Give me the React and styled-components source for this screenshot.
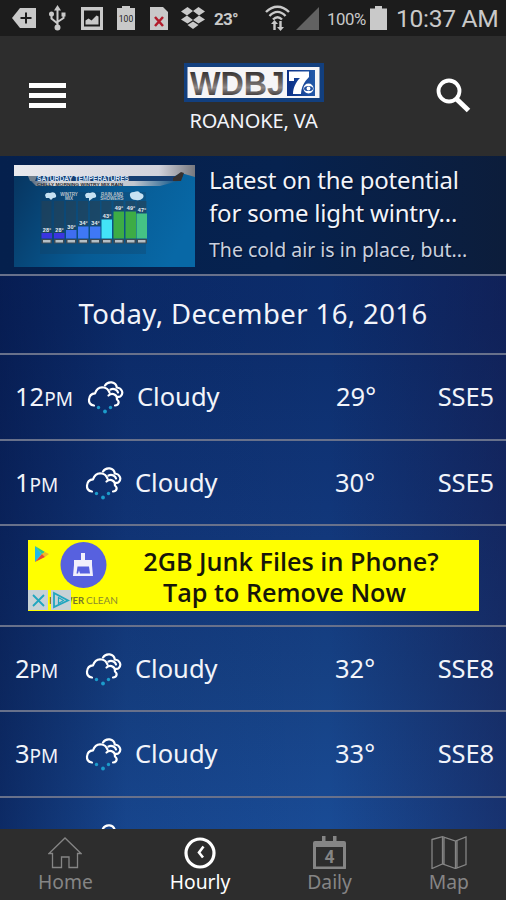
import React from 'react';
import styled, { createGlobalStyle } from 'styled-components';

const GlobalStyle = createGlobalStyle`
  * {
    box-sizing: border-box;
  }

  body {
    margin: 0;
    background: #2d2d2d;
    font-family: 'Noto Sans', 'Open Sans', sans-serif;
  }

  svg {
    display: block;
    flex: none;
  }
`;

const Screen = styled.div`
  display: flex;
  flex-direction: column;
  width: 506px;
  height: 900px;
  overflow: hidden;
  color: #f2f4fa;
`;

const StatusBar = styled.div`
  display: flex;
  align-items: center;
  height: 36px;
  flex: none;
  padding-left: 12px;
  background: #1c1c1c;
  color: #c9c9c9;
  font-family: Roboto, sans-serif;
  white-space: nowrap;
`;

const StatusIcon = styled.svg`
  margin-right: ${({ $gap }) => $gap}px;
`;

const StatusText = styled.span`
  width: ${({ $width }) => $width}px;
  flex: none;
  font-size: ${({ $size }) => $size}px;
  font-weight: ${({ $bold }) => ($bold ? 700 : 400)};
  letter-spacing: ${({ $spacing }) => $spacing || 0}px;
  line-height: 36px;
  padding-top: 1px;
`;

const Header = styled.header`
  display: flex;
  justify-content: space-between;
  height: 120px;
  flex: none;
  padding: 27px 35px 0 29px;
  background: #2d2d2d;
`;

const MenuButton = styled.div`
  display: flex;
  flex-direction: column;
  gap: 5px;
  width: 37px;
  padding-top: 20px;

  i {
    height: 5px;
    background: #fff;
  }
`;

const Brand = styled.div`
  display: flex;
  flex-direction: column;
  align-items: center;
  margin-left: 5px;
`;

const City = styled.div`
  margin-top: 6px;
  font-size: 20px;
  line-height: 26px;
  letter-spacing: -0.1px;
`;

const SearchIcon = styled.svg`
  margin-top: 15px;
`;

const Content = styled.main`
  flex: 1;
  overflow: hidden;
  background:
    linear-gradient(90deg, rgba(3, 16, 62, 0.55) 0%, rgba(3, 16, 62, 0.1) 25%, rgba(3, 16, 62, 0) 65%, rgba(22, 20, 66, 0.45) 100%),
    linear-gradient(180deg, #0b2a68 0%, #0c2d6c 25%, #113679 52%, #164184 78%, #194b95 100%);
`;

const News = styled.section`
  display: flex;
  height: 118px;
  padding: 9px 0 0 14px;
  background: linear-gradient(90deg, #05204d 0%, #06224f 55%, #0c1d3b 100%);
`;

const NewsText = styled.div`
  margin-left: 14px;
  text-shadow: 1px 1px 1px #00102e;
  white-space: nowrap;

  h2 {
    margin: -2px 0 0;
    font-size: 24px;
    font-weight: 400;
    line-height: 33px;
    letter-spacing: -0.2px;
  }

  p {
    margin: 8px 0 0;
    font-size: 19.5px;
    line-height: 26px;
    color: #c9d0de;
  }
`;

const DateTitle = styled.div`
  height: 79px;
  border-top: 2px solid #68718b;
  font-size: 27.5px;
  line-height: 75px;
  letter-spacing: 0.4px;
  text-align: center;
  white-space: nowrap;
`;

const Row = styled.div`
  display: flex;
  height: 85.6px;
  border-top: 2px solid #68718b;
  padding: 0 12px 0 15px;
  font-size: 25.5px;
  line-height: 82px;
`;

const PeekRow = styled(Row)`
  height: 40px;
  padding-left: 85px;
`;

const Time = styled.div`
  width: ${({ $wide }) => ($wide ? 72 : 70)}px;

  small {
    font-size: 19px;
  }
`;

const Sky = styled.div`
  width: ${({ $wide }) => ($wide ? 249 : 250)}px;
  display: flex;
  gap: 12px;
`;

const CloudIcon = styled.svg`
  margin-top: 26px;
`;

const Temp = styled.div`
  flex: 1;
`;

const Wind = styled.div`
  letter-spacing: -0.1px;
`;

const AdSlot = styled.div`
  height: 100.5px;
  border-top: 2px solid #68718b;
  padding: 14px 27px 0 28px;
`;

const Ad = styled.div`
  display: flex;
  height: 71px;
  background: #ffff00;
  color: #16160a;
`;

const AdText = styled.div`
  margin-left: 2px;
  width: 302px;
  padding-top: 6px;
  font-family: 'Open Sans', sans-serif;
  font-weight: 600;
  font-size: 25.2px;
  line-height: 31px;
  text-align: center;
  white-space: nowrap;

  span {
    display: block;
    padding-right: 13px;
  }
`;

const Nav = styled.nav`
  display: flex;
  justify-content: space-between;
  height: 71px;
  flex: none;
  padding: 7px 37px 0 38px;
  background: #2d2d2d;
`;

const NavItem = styled.div`
  display: flex;
  flex-direction: column;
  align-items: center;
  color: ${({ $active }) => ($active ? '#ffffff' : '#858585')};
  font-size: 19.3px;
  line-height: 24px;

  svg {
    margin-bottom: 1px;
  }
`;

const bars = [
  [27.5, 68, 5.5, '#3a35e0', "28°"],
  [40, 68, 5.5, '#3a35e0', "28°"],
  [52, 65, 8.5, '#3f6df0', "30°"],
  [64, 61.5, 12, '#3f78f5', "34°"],
  [76, 61.5, 12, '#3f78f5', "34°"],
  [87.5, 54.5, 19, '#43e4f7', "43°"],
  [99.5, 46.5, 27, '#3dac45', "49°"],
  [111.5, 46.5, 27, '#3dac45', "49°"],
  [122.5, 48.5, 25, '#45c285', "47°"],
];

function StatusIcons() {
  return (
    <>
      <StatusIcon $gap={13} width="24" height="20" viewBox="0 0 24 20">
        <path d="M8 0h16v20H8L0 10z" fill="#c9c9c9" />
        <path d="M14 4.5v11M8.5 10h11" stroke="#1c1c1c" strokeWidth="2" />
      </StatusIcon>
      <StatusIcon $gap={15} width="17" height="26" viewBox="0 0 17 26" fill="none" stroke="#c9c9c9" strokeWidth="2">
        <path d="M8.5 4v18M2.5 10v3.5l6 5M14.5 10v3l-6 4" />
        <path d="M8.5 0l3.5 5.500H5z" fill="#c9c9c9" stroke="none" />
        <circle cx="8.500" cy="22.500" r="2" fill="#c9c9c9" />
        <circle cx="2.500" cy="9" r="1.500" fill="#c9c9c9" />
        <path d="M12.500 7.500h4v4h-4z" fill="#c9c9c9" stroke="none" />
      </StatusIcon>
      <StatusIcon $gap={14} width="22" height="23" viewBox="0 0 22 23">
        <path d="M0 0h22v23H0z" fill="#c9c9c9" />
        <path d="M3 3.500h16v16H3z" fill="#1c1c1c" />
        <path d="M4.500 17.500v-4l3-2 3 2 5-5 2 1v8z" fill="#c9c9c9" />
      </StatusIcon>
      <StatusIcon $gap={15} width="18" height="24" viewBox="0 0 18 24">
        <path d="M0 2h5V0h8v2h5v22H0z" fill="#c9c9c9" />
        <text x="9" y="16" fontSize="8.5" fontFamily="Roboto" textAnchor="middle" fill="#222">100</text>
      </StatusIcon>
      <StatusIcon $gap={13} width="18" height="23" viewBox="0 0 18 23">
        <path d="M0 0h13l5 5v18H0z" fill="#c9c9c9" />
        <path d="M5 10l8 9M13 10l-8 9" stroke="#b11c2b" strokeWidth="2.500" />
      </StatusIcon>
      <StatusIcon $gap={9} width="24" height="22" viewBox="0 0 24 22" fill="#c9c9c9">
        <path d="M6.500 0L12 4 6 8.500 0 4.500zM17.500 0L24 4.500 18 8.500 12 4zM6 8.500L12 13 6.500 16.500 0 12.500zM18 8.500l6 4-6.500 4L12 13zM12 14.500l5.500 3.500-5.500 4-5.500-4z" />
      </StatusIcon>
      <StatusText $width={51} $size={17} $bold $spacing={-0.8}>23°</StatusText>
      <StatusIcon $gap={6} width="25" height="26" viewBox="0 0 25 26" fill="none" stroke="#c9c9c9" strokeWidth="2.400">
        <path d="M1 7c7-7 16-7 23 0M4.500 11c5-5.500 11-5.500 16 0M8 14.500c3-3 6-3 9 0" />
        <path d="M9.500 25v-8M15.500 16v8" />
        <path d="M6 19l3.500-4 3.500 4zM12 22l3.500 4 3.500-4z" fill="#c9c9c9" stroke="none" />
      </StatusIcon>
      <StatusIcon $gap={8} width="23" height="23" viewBox="0 0 23 23">
        <path d="M0 23L23 0v23z" fill="#626262" />
      </StatusIcon>
      <StatusText $width={43} $size={16.8} $spacing={-0.4}>100%</StatusText>
      <StatusIcon $gap={9} width="17" height="24" viewBox="0 0 17 24">
        <path d="M0 2.500h5V0h7v2.500h5V24H0z" fill="#c9c9c9" />
      </StatusIcon>
      <StatusText $width={108} $size={24.600} $spacing={-0.3}>10:37 AM</StatusText>
    </>
  );
}

function Logo() {
  return (
    <svg width="140" height="39" viewBox="0 0 140 39">
      <defs>
        <linearGradient id="steel" x1="0" y1="0" x2="0" y2="1">
          <stop offset="0.15" stopColor="#2f2b2b" />
          <stop offset="0.5" stopColor="#6b6564" />
          <stop offset="0.62" stopColor="#8d8786" />
          <stop offset="0.85" stopColor="#3c3737" />
        </linearGradient>
        <linearGradient id="seven" x1="0" y1="0" x2="1" y2="0">
          <stop offset="0" stopColor="#0a2f86" />
          <stop offset="1" stopColor="#2359a9" />
        </linearGradient>
      </defs>
      <path d="M0 0h140v39H0z" fill="#123f7e" />
      <path d="M3.500 4h132v31h-132z" fill="#f6f5f7" />
      <text x="6" y="32" fontFamily="Liberation Sans" fontWeight="700" fontSize="34" fill="url(#steel)" textLength="95" lengthAdjust="spacingAndGlyphs">WDBJ</text>
      <path d="M103 7h28v26h-28z" fill="url(#seven)" />
      <path d="M105 8.500h20v5.500c-5 5-7.500 10-8 17h-8c0-6 3-12 7-16h-6v3h-5z" fill="#fff" />
      <ellipse cx="124.500" cy="25.500" rx="5" ry="5" fill="#fff" />
      <ellipse cx="124.500" cy="25.500" rx="4.500" ry="2.600" fill="#2350a0" />
      <circle cx="124.500" cy="25.500" r="1.900" fill="#fff" />
    </svg>
  );
}

function Thumbnail() {
  return (
    <svg width="181" height="102" viewBox="0 0 181 102">
      <defs>
        <linearGradient id="studio" x1="0" y1="0.2" x2="1" y2="0.5">
          <stop offset="0" stopColor="#073763" />
          <stop offset="0.55" stopColor="#075b94" />
          <stop offset="1" stopColor="#0868a6" />
        </linearGradient>
        <linearGradient id="ribbon" x1="0" y1="0" x2="1" y2="0">
          <stop offset="0" stopColor="#e9e9ed" />
          <stop offset="0.8" stopColor="#d2d3dc" />
          <stop offset="1" stopColor="#77787e" />
        </linearGradient>
        <linearGradient id="strip" x1="0" y1="0" x2="1" y2="0">
          <stop offset="0" stopColor="#51657c" />
          <stop offset="0.15" stopColor="#d8d8da" />
          <stop offset="0.7" stopColor="#c1c7cf" />
          <stop offset="1" stopColor="#0d5488" />
        </linearGradient>
      </defs>
      <path d="M0 0h181v102H0z" fill="url(#studio)" />
      <path d="M14 11h155l-6 5H17z" fill="#153e72" />
      <path d="M17 16h147l-18 5H22z" fill="url(#strip)" />
      <path d="M0 0h181v12l-14-4-6 3H0z" fill="url(#ribbon)" />
      <path d="M159 13l8-6 3 1-3 8h-8z" fill="#35302f" />
      <path d="M14 11l9 0-2 5h-5z" fill="#72808d" />
      <text x="23" y="16" fontFamily="Liberation Sans" fontWeight="700" fontSize="6.500" fill="#d9e8fa" textLength="92" lengthAdjust="spacingAndGlyphs">SATURDAY TEMPERATURES</text>
      <text x="23" y="20.500" fontFamily="Liberation Sans" fontWeight="700" fontSize="4" fill="#25282e" textLength="86" lengthAdjust="spacingAndGlyphs">CHILLY MORNING WINTRY MIX RAIN</text>
      <path d="M26 27h106v62H26z" fill="#173f60" opacity="0.3" />
      <path d="M31 30q1-3 5-2 5-2 6 2 1 3-3 3l-2 2-2-2h-3zM71 30q1-3 5-2 5-2 6 2 1 3-3 3l-4 3v-3h-3zM116 31q-1-4 4-4 5-2 6 1 5 1 3 5-3 3-7 2-5 0-6-4z" fill="#c7e2f3" />
      <g fontFamily="Liberation Sans" fontWeight="700" fontSize="4.500" fill="#b9c4ce" textAnchor="middle">
        <text x="55" y="31">WINTRY</text>
        <text x="55" y="35">MIX</text>
        <text x="98" y="31">RAIN AND</text>
        <text x="98" y="35">SHOWERS</text>
      </g>
      {bars.map(([x, y, h, fill, label]) => (
        <g key={x}>
          <path d={`M${x} 36h10V${y}h-10z`} fill="#293f50" opacity="0.5" />
          <rect x={x} y={y} width="10.500" height={h} fill={fill} />
          <text x={x + 5.5} y={y - 1.5} textAnchor="middle" fontFamily="Liberation Sans" fontWeight="700" fontSize="5.500" fill="#e8eef4">{label}</text>
          <rect x={x} y="74" width="10.500" height="4.500" fill="#3c4a55" />
          <rect x={x + 1.5} y="75" width="7.500" height="2.500" fill="#b5bfc5" />
        </g>
      ))}
    </svg>
  );
}

function Cloud() {
  return (
    <CloudIcon width="38" height="34" viewBox="0 0 38 34" fill="none" stroke="#fff" strokeWidth="2.200" strokeLinecap="round">
      <path d="M7 24.500C3.500 24 1.700 21.500 2 18.500 2.300 15 4.500 12.500 8 12.300 9.500 8 13 5.700 17 6.500 20 7 21.500 9 22.500 11.500M21.500 14.500c4-3.500 9-.5 8.500 4 3 2.500 1.500 6-2 6" />
      <path d="M18 4.500c3-5 11-4 11.800 2 5.200.5 7 5.500 4 8.500-1 1-2 1-3 .8M23.500 8.500c3.500-1.500 7 .5 7.500 3" />
      <g fill="#1c9ccb" stroke="none">
        <circle cx="11.500" cy="26.500" r="1.700" />
        <circle cx="18" cy="30.500" r="1.900" />
        <circle cx="23.500" cy="26.500" r="1.700" />
      </g>
    </CloudIcon>
  );
}

function HourRow({ hour, temp, wind }) {
  const wide = hour > 9;
  return (
    <Row>
      <Time $wide={wide}>{hour}<small>PM</small></Time>
      <Sky $wide={wide}>
        <Cloud />
        Cloudy
      </Sky>
      <Temp>{temp}°</Temp>
      <Wind>{wind}</Wind>
    </Row>
  );
}

function AdBadge() {
  return (
    <svg width="110" height="71" viewBox="0 0 110 71">
      <path d="M7 6v16l7-8z" fill="#21b8e9" />
      <path d="M7 6l10 6-3 2z" fill="#2cc58e" />
      <path d="M14 14l3-2 4 2-4 3z" fill="#edba29" />
      <path d="M7 22l7-8 3 3z" fill="#e3463d" />
      <circle cx="55.500" cy="25" r="23" fill="#5761df" />
      <path d="M53 13h4v7h7v5l1 11H45l1-11v-5h7z" fill="#f1f0fc" />
      <path d="M49.500 26.500h11.500l1 7H52l-1-3-1 3h-1.500z" fill="#5761df" />
      <text x="21" y="64" fontFamily="Lato" fontWeight="700" fontSize="10" fill="#77772a" textLength="35" lengthAdjust="spacingAndGlyphs">POWER</text>
      <text x="58" y="64" fontFamily="Lato" fontSize="10" fill="#8a8a30" textLength="32">CLEAN</text>
      <path d="M0 50h20v20H0zM23 50h20v20H23z" fill="#c7d2d6" />
      <path d="M5 55l11 11M16 55L5 66M26 53l14 7.500L26 67z" fill="none" stroke="#20a6bf" strokeWidth="1.800" />
      <path d="M30.500 57.500v6l5-3z" fill="none" stroke="#20a6bf" strokeWidth="1.200" />
    </svg>
  );
}

export default function App() {
  return (
    <>
      <GlobalStyle />
      <Screen>
        <StatusBar>
          <StatusIcons />
        </StatusBar>
        <Header>
          <MenuButton>
            <i />
            <i />
            <i />
          </MenuButton>
          <Brand>
            <Logo />
            <City>ROANOKE, VA</City>
          </Brand>
          <SearchIcon width="35" height="36" viewBox="0 0 35 36" fill="none" stroke="#fff">
            <circle cx="13" cy="13" r="10.500" strokeWidth="3.800" />
            <path d="M20.500 21L32.500 32.500" strokeWidth="5" />
          </SearchIcon>
        </Header>
        <Content>
          <News>
            <Thumbnail />
            <NewsText>
              <h2>Latest on the potential<br />for some light wintry...</h2>
              <p>The cold air is in place, but...</p>
            </NewsText>
          </News>
          <DateTitle>Today, December 16, 2016</DateTitle>
          <HourRow hour={12} temp={29} wind="SSE5" />
          <HourRow hour={1} temp={30} wind="SSE5" />
          <AdSlot>
            <Ad>
              <AdBadge />
              <AdText>
                2GB Junk Files in Phone?
                <span>Tap to Remove Now</span>
              </AdText>
            </Ad>
          </AdSlot>
          <HourRow hour={2} temp={32} wind="SSE8" />
          <HourRow hour={3} temp={33} wind="SSE8" />
          <PeekRow>
            <Cloud />
          </PeekRow>
        </Content>
        <Nav>
          <NavItem>
            <svg width="34" height="33" viewBox="0 0 34 33" fill="none" stroke="currentColor" strokeWidth="1.300">
              <path d="M1 17.500L17 2l16 15.500h-3.500V31.500H21V21h-7.500v10.500H4.500v-14z" />
            </svg>
            Home
          </NavItem>
          <NavItem $active>
            <svg width="34" height="33" viewBox="0 0 34 33" fill="none" stroke="currentColor">
              <circle cx="17" cy="17" r="14" strokeWidth="3.200" />
              <path d="M20.500 10.500l-4.500 6 4 5" strokeWidth="2.600" />
            </svg>
            Hourly
          </NavItem>
          <NavItem>
            <svg width="35" height="33" viewBox="0 0 35 33">
              <path d="M3 5h7V0h3.500v5h7.500V0h3.500v5H32q2 0 2 2v25q0 2-2 2H3q-2 0-2-2V7q0-2 2-2zM4 11v19.500h27V11z" fill="currentColor" fillRule="evenodd" />
              <text x="17.500" y="26.500" textAnchor="middle" fontFamily="Roboto" fontWeight="700" fontSize="17.500" fill="currentColor">4</text>
            </svg>
            Daily
          </NavItem>
          <NavItem>
            <svg width="36" height="33" viewBox="0 0 36 33" fill="none" stroke="currentColor" strokeWidth="1.300">
              <path d="M1 3.500L11.500.700 24.500 5 35 1v27.500l-10.500 4-13-4.500L1 32.500zM11.500 1v27M13 2v26M24.500 5v27M26 5v27" />
            </svg>
            Map
          </NavItem>
        </Nav>
      </Screen>
    </>
  );
}
